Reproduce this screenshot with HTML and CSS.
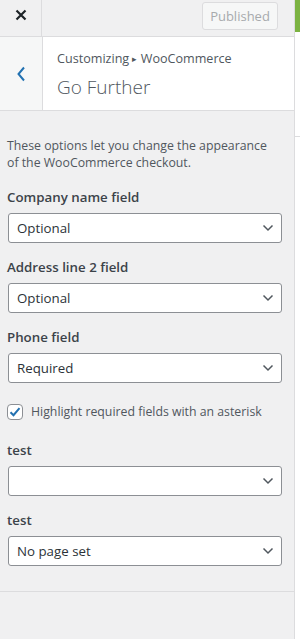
FILE: index.html
```html
<!DOCTYPE html>
<html>
	<head>
		<title>Customizing - Go Further</title>
		<meta charset="UTF-8">
		<link rel="stylesheet" href="styles.css">
	</head>
	<body>
		<div class="sidebar">
			<div class="header">
				<div class="close">
					<svg width="12" height="12" viewBox="0 0 12 12"><path d="M1.5 1.5l9 9M10.5 1.5l-9 9" stroke="#1d2327" stroke-width="2.2" fill="none"/></svg>
				</div>
				<div class="publish">Published</div>
			</div>
			<div class="sectionTitle">
				<div class="back">
					<svg width="10" height="16" viewBox="0 0 10 16"><path d="M8 1.5L2.5 8 8 14.5" stroke="#2271b1" stroke-width="2" fill="none"/></svg>
				</div>
				<div class="titleText">
					<p class="crumb">Customizing <span class="arrow">&#9656;</span> WooCommerce</p>
					<h3>Go Further</h3>
				</div>
			</div>
			<div class="controls">
				<p class="description">These options let you change the appearance of the WooCommerce checkout.</p>

				<div class="control">
					<div class="label">Company name field</div>
					<div class="select">Optional<svg width="12" height="8" viewBox="0 0 12 8"><path d="M1.5 1.5L6 6l4.5-4.5" stroke="#50575e" stroke-width="1.5" fill="none"/></svg></div>
				</div>
				<div class="control">
					<div class="label">Address line 2 field</div>
					<div class="select">Optional<svg width="12" height="8" viewBox="0 0 12 8"><path d="M1.5 1.5L6 6l4.5-4.5" stroke="#50575e" stroke-width="1.5" fill="none"/></svg></div>
				</div>
				<div class="control">
					<div class="label">Phone field</div>
					<div class="select">Required<svg width="12" height="8" viewBox="0 0 12 8"><path d="M1.5 1.5L6 6l4.5-4.5" stroke="#50575e" stroke-width="1.5" fill="none"/></svg></div>
				</div>
				<div class="checkRow">
					<span class="checkbox"><svg width="14" height="14" viewBox="0 0 14 14"><path d="M2.5 7.2l3 3 6-7" stroke="#2271b1" stroke-width="2" fill="none"/></svg></span>
					<span>Highlight required fields with an asterisk</span>
				</div>
				<div class="control">
					<div class="label">test</div>
					<div class="select"><span></span><svg width="12" height="8" viewBox="0 0 12 8"><path d="M1.5 1.5L6 6l4.5-4.5" stroke="#50575e" stroke-width="1.5" fill="none"/></svg></div>
				</div>
				<div class="control">
					<div class="label">test</div>
					<div class="select">No page set<svg width="12" height="8" viewBox="0 0 12 8"><path d="M1.5 1.5L6 6l4.5-4.5" stroke="#50575e" stroke-width="1.5" fill="none"/></svg></div>
				</div>
			</div>
		</div>
		<div class="preview">
			<div class="previewBar"></div>
			<div class="previewLine"></div>
		</div>
	</body>
</html>
```

FILE: styles.css
```css
body{
	margin: 0;
	display: flex;
	height: 639px;
	overflow: hidden;
	font-family: "Open Sans", "Noto Sans", sans-serif;
	color: #50575e;
}
.sidebar{
	width: 294px;
	height: 639px;
	background-color: #f0f0f1;
	border-right: 1px solid #dcdcde;
	flex: none;
}
.header{
	height: 36px;
	border-bottom: 1px solid #dcdcde;
	display: flex;
	justify-content: space-between;
}
.close{
	width: 42px;
	border-right: 1px solid #dcdcde;
	display: flex;
	align-items: center;
	justify-content: center;
	padding-bottom: 6px;
	box-sizing: border-box;
}
.publish{
	margin: 2px 16px 0 0;
	width: 76px;
	height: 28px;
	box-sizing: border-box;
	border: 1px solid #dcdcde;
	border-radius: 3px;
	background-color: #f6f7f7;
	color: #a7aaad;
	font-size: 13px;
	line-height: 26px;
	text-align: center;
}
.sectionTitle{
	height: 73px;
	display: flex;
	background-color: #fff;
	border-bottom: 1px solid #dcdcde;
}
.back{
	width: 42px;
	flex: none;
	background-color: #f6f7f7;
	border-right: 1px solid #dcdcde;
	display: flex;
	align-items: center;
	justify-content: center;
}
.titleText{
	padding: 12px 0 0 14px;
}
.crumb{
	margin: 0;
	font-size: 12.6px;
	line-height: 20px;
	color: #50575e;
}
.arrow{
	font-size: 9px;
	position: relative;
	top: -1px;
}
.titleText h3{
	margin: 4px 0 0 0;
	font-size: 19px;
	font-weight: 300;
	line-height: 26px;
	color: #50575e;
}
.controls{
	padding: 26px 12px 0 7px;
	border-bottom: 1px solid #dcdcde;
	height: 454px;
}
.description{
	margin: 0 0 16px 0;
	padding-right: 6px;
	font-size: 12.3px;
	line-height: 17px;
	color: #50575e;
}
.control{
	margin-bottom: 14px;
}
.label{
	font-size: 13.3px;
	font-weight: 600;
	line-height: 20px;
	color: #3c434a;
	margin-bottom: 6px;
}
.select{
	margin-left: 1px;
	height: 30px;
	box-sizing: border-box;
	border: 1px solid #8c8f94;
	border-radius: 3px;
	background-color: #fff;
	display: flex;
	align-items: center;
	justify-content: space-between;
	padding: 0 7px 0 8px;
	font-size: 13.3px;
	color: #2c3338;
}
.checkRow{
	display: flex;
	align-items: center;
	gap: 8px;
	font-size: 12.3px;
	color: #50575e;
	margin: 20px 0 20px 0;
}
.checkbox{
	width: 16px;
	height: 16px;
	box-sizing: border-box;
	border: 1px solid #8c8f94;
	border-radius: 4px;
	background-color: #fff;
	display: flex;
	align-items: center;
	justify-content: center;
}
.preview{
	flex: 1;
	background-color: #fff;
}
.previewBar{
	height: 32px;
	background-color: #7cb342;
}
.previewLine{
	margin-top: 104px;
	height: 1px;
	background-color: #dcdcde;
}
```
